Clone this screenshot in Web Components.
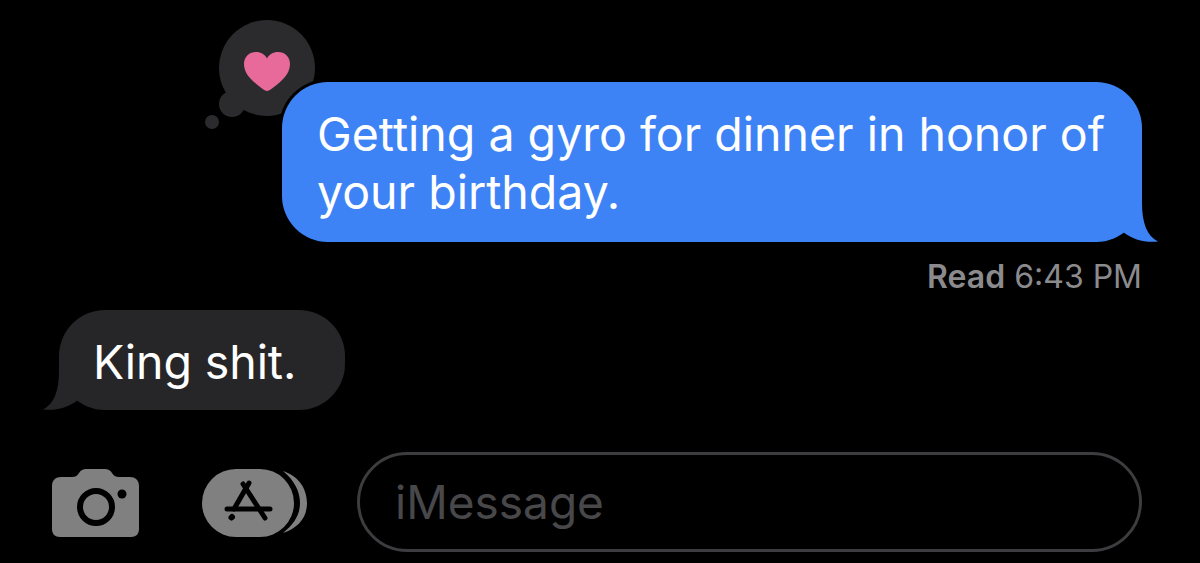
<!DOCTYPE html>
<html lang="en">
<head>
<meta charset="utf-8">
<title>Messages</title>
<style>
  html, body { margin: 0; height: 100%; background: #000; }
  body { font-family: Inter, "Liberation Sans", sans-serif; overflow: hidden; }
</style>
</head>
<body>
<message-thread>
  <chat-bubble kind="sent" reaction="heart">Getting a gyro for dinner in honor of your birthday.</chat-bubble>
  <read-receipt time="6:43 PM"></read-receipt>
  <chat-bubble kind="received">King shit.</chat-bubble>
  <compose-bar placeholder="iMessage"></compose-bar>
</message-thread>

<script>
class MessageThread extends HTMLElement {
  constructor() {
    super();
    this.attachShadow({ mode: "open" });
    this.shadowRoot.innerHTML = `
      <style>
        :host {
          display: flex;
          flex-direction: column;
          box-sizing: border-box;
          width: 1200px;
          height: 563px;
          padding: 82px 58px 0 59px;
          background: #000;
          isolation: isolate;
        }
      </style>
      <slot></slot>
    `;
  }
}

class ChatBubble extends HTMLElement {
  constructor() {
    super();
    this.attachShadow({ mode: "open" });
    this.shadowRoot.innerHTML = `
      <style>
        :host {
          display: block;
          position: relative;
          box-sizing: border-box;
          font-size: 46.5px;
          line-height: 58px;
          color: #fff;
        }
        :host([kind="sent"]) {
          align-self: flex-end;
          width: 860px;
          height: 160px;
          padding: 23px 30px 0 35px;
          border-radius: 46px;
          background: #3e83f6;
          box-shadow: 0 0 0 3px #000;
        }
        :host([kind="received"]) {
          align-self: flex-start;
          height: 100px;
          margin-top: 15px;
          padding: 23px 49px 0 34px;
          border-radius: 46px;
          background: #262628;
          letter-spacing: -0.1px;
        }
        .tail { position: absolute; bottom: -1px; width: 40px; height: 40px; overflow: visible; }
        :host([kind="sent"]) .tail { right: -18px; fill: #3e83f6; }
        :host([kind="received"]) .tail { left: -18px; transform: scaleX(-1); fill: #262628; }
        .reaction { position: absolute; left: -77px; top: -62px; width: 112px; height: 116px; z-index: -1; }
      </style>
      <slot></slot>
      <svg class="tail" viewBox="0 0 40 40" aria-hidden="true">
        <path d="M22 -8V0C22 20 27 33 38 38.500C26 40 13 37 3 29L0 10Z"/>
      </svg>
      ${this.getAttribute("reaction") === "heart" ? `
      <svg class="reaction" viewBox="0 0 112 116" aria-hidden="true">
        <circle cx="7" cy="102" r="7" fill="#2b2b2d"/>
        <circle cx="27" cy="84" r="13" fill="#2b2b2d"/>
        <circle cx="62" cy="48" r="48" fill="#2b2b2d"/>
        <path fill="#e76a9a" d="M62 71C60.500 71 59 70 57 68.500C47 61 39 54 39 44C39 36.500 44.500 32 51 32C56 32 60 34.500 62 38.500C64 34.500 68 32 73 32C79.500 32 85 36.500 85 44C85 54 77 61 67 68.500C65 70 63.500 71 62 71Z"/>
      </svg>` : ""}
    `;
  }
}

class ReadReceipt extends HTMLElement {
  constructor() {
    super();
    this.attachShadow({ mode: "open" });
    this.shadowRoot.innerHTML = `
      <style>
        :host {
          display: block;
          align-self: flex-end;
          margin-top: 17px;
          font-size: 32px;
          line-height: 36px;
          color: #8b8b8e;
          white-space: nowrap;
        }
        b { font-weight: 600; }
      </style>
      <b>Read</b> <span></span>
    `;
    this.shadowRoot.querySelector("span").textContent = this.getAttribute("time");
  }
}

class ComposeBar extends HTMLElement {
  constructor() {
    super();
    this.attachShadow({ mode: "open" });
    this.shadowRoot.innerHTML = `
      <style>
        :host {
          display: flex;
          align-items: center;
          margin: 42px 0 0 -7px;
          height: 100px;
        }
        .camera { width: 87px; height: 68px; margin-top: 2px; flex: none; }
        .apps { width: 106px; height: 70px; margin: 2px 0 0 63px; flex: none; }
        .field {
          flex: 1;
          box-sizing: border-box;
          height: 100px;
          margin-left: 49px;
          padding: 0 0 0 35px;
          display: flex;
          align-items: center;
          border: 3px solid #3d3d40;
          border-radius: 50px;
          font-size: 46px;
          color: #48484a;
        }
      </style>
      <svg class="camera" viewBox="0 0 87 68" aria-hidden="true">
        <path fill="#808080" fill-rule="evenodd" d="M9 8H20C23 8 25 7 27 4C29 1 31 0 34 0H53C56 0 58 1 60 4C62 7 64 8 67 8H78C83 8 87 11 87 17V60C87 65 84 68 79 68H8C3 68 0 65 0 60V17C0 11 4 8 9 8Z"/>
        <circle cx="44" cy="38" r="16" fill="none" stroke="#000" stroke-width="6"/>
        <circle cx="70" cy="25" r="4.500" fill="#000"/>
      </svg>
      <svg class="apps" viewBox="0 0 106 70" aria-hidden="true">
        <path fill="#808080" d="M81 3C96 8 105 20 105 35C105 50 96 60 81 65C92 56 98 47 98 35C98 23 92 12 81 3Z"/>
        <rect width="92" height="68" y="1" rx="34" fill="#808080"/>
        <g stroke="#000" stroke-width="5" stroke-linecap="round" fill="none">
          <path d="M47 15L32 41"/>
          <path d="M41 16L63 50"/>
          <path d="M25 41H68"/>
          <path d="M29.500 49.500L30 49" stroke-width="6"/>
        </g>
      </svg>
      <div class="field"></div>
    `;
    this.shadowRoot.querySelector(".field").textContent = this.getAttribute("placeholder");
  }
}

customElements.define("message-thread", MessageThread);
customElements.define("chat-bubble", ChatBubble);
customElements.define("read-receipt", ReadReceipt);
customElements.define("compose-bar", ComposeBar);
</script>
</body>
</html>
